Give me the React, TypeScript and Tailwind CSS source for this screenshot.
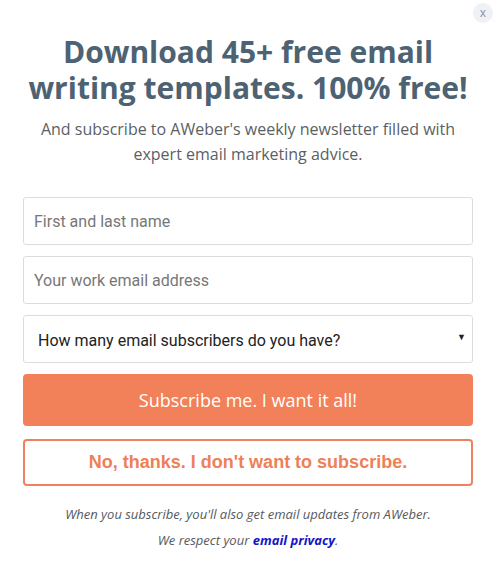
import { useState } from 'react'

export default function App() {
  const [name, setName] = useState('')
  const [email, setEmail] = useState('')
  const [count, setCount] = useState('')

  return (
    <div className="relative w-[498px] h-[564px] bg-white overflow-hidden">
      <button className="absolute right-[5px] top-[3px] w-5 h-5 rounded-full bg-[#eef1f6] text-[#8a93a3] text-[12px] leading-5 text-center font-['Open_Sans',sans-serif]">
        x
      </button>

      <div className="pl-[23px] pr-[25px] pt-[34px]">
        <h1 className="text-center text-[30px] leading-[36px] font-bold text-[#4d6272] font-['Open_Sans',sans-serif]">
          Download 45+ free email
          <br />
          writing templates. 100% free!
        </h1>
        <p className="mt-[11px] text-center text-[16px] leading-[25px] text-[#5b5f63] font-['Open_Sans',sans-serif]">
          And subscribe to AWeber's weekly newsletter filled with
          <br />
          expert email marketing advice.
        </p>

        <form className="mt-[30px] flex flex-col" onSubmit={(e) => e.preventDefault()}>
          <input
            value={name}
            onChange={(e) => setName(e.target.value)}
            placeholder="First and last name"
            className="h-12 w-full rounded-[3px] border border-[#dcdcdc] px-[10px] text-[16px] text-[#333] placeholder:text-[#777] font-['Roboto',sans-serif] outline-none"
          />
          <input
            value={email}
            onChange={(e) => setEmail(e.target.value)}
            placeholder="Your work email address"
            className="mt-[11px] h-12 w-full rounded-[3px] border border-[#dcdcdc] px-[10px] text-[16px] text-[#333] placeholder:text-[#777] font-['Roboto',sans-serif] outline-none"
          />
          <div className="relative mt-[11px]">
            <select
              value={count}
              onChange={(e) => setCount(e.target.value)}
              className="h-12 w-full appearance-none rounded-[3px] border border-[#dcdcdc] bg-white pl-[14px] pr-8 pt-[4px] text-[16px] text-[#222] font-['Roboto',sans-serif] outline-none"
            >
              <option value="">How many email subscribers do you have?</option>
              <option value="0">0 - 500</option>
              <option value="1">500 - 2,500</option>
              <option value="2">2,500+</option>
            </select>
            <span className="pointer-events-none absolute right-[7px] top-[17px] text-[9px] leading-none text-[#222]">▼</span>
          </div>
          <button
            type="submit"
            className="mt-[11px] h-[52px] w-full rounded-[4px] bg-[#f28159] text-white text-[18px] font-['Open_Sans',sans-serif]"
          >
            Subscribe me. I want it all!
          </button>
          <button
            type="button"
            className="mt-[13px] h-[47px] w-full rounded-[4px] border-2 border-[#ec825e] bg-white text-[#ef7f57] text-[18px] font-bold font-['Liberation_Sans',Arial,sans-serif]"
          >
            No, thanks. I don't want to subscribe.
          </button>
        </form>

        <div className="mt-[15px] text-center text-[13px] italic text-[#555a60] font-['Open_Sans',sans-serif]">
          <p className="leading-[26px]">When you subscribe, you'll also get email updates from AWeber.</p>
          <p className="leading-[26px]">
            We respect your{' '}
            <a href="#" className="font-bold text-[#1414c8]">
              email privacy
            </a>
            .
          </p>
        </div>
      </div>
    </div>
  )
}
